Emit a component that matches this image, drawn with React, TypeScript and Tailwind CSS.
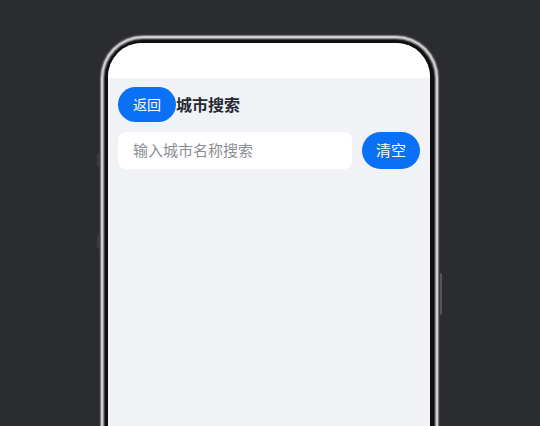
import React from "react";

export default function App() {
  return (
    <div
      className="w-[540px] h-[426px] overflow-hidden bg-[#2b2c30] flex justify-center pt-[34px]"
      style={{ fontFamily: '"Noto Sans", "Noto Sans CJK SC", sans-serif' }}
    >
      <div className="relative ml-[-1px]">
        {/* side buttons */}
        <div className="absolute left-[-2px] top-[119px] w-[2px] h-[14px] bg-[#3c3d41] rounded-l" />
        <div className="absolute left-[-2px] top-[201px] w-[2px] h-[14px] bg-[#3c3d41] rounded-l" />
        <div className="absolute right-[-2px] top-[239px] w-[2px] h-[42px] bg-[#55565a] rounded-r" />
        <div className="w-[341px] h-[460px] rounded-[44px] bg-[#3a3a3c] p-[1px]">
          <div className="w-full h-full rounded-[43px] bg-[#747476] p-[1px]">
            <div className="w-full h-full rounded-[42px] bg-[#cfcfd1] p-[2px]">
              <div className="w-full h-full rounded-[40px] bg-[#8c8c8e] p-[1px]">
                <div className="w-full h-full rounded-[39px] bg-[#3e3e40] p-[1px]">
                  <div className="w-full h-full rounded-[38px] bg-[#0f0f11] pt-[3px] pb-[3px] pl-[3px] pr-[4px]">
                    <div className="w-full h-full rounded-[34px] overflow-hidden bg-[#f0f2f5] flex flex-col">
                      <div className="h-[35px] bg-white shrink-0" />
                      <div className="px-[10px] pt-[9px] flex flex-col gap-[10px]">
                        <div className="flex items-center h-[35px]">
                          <button className="h-[35px] w-[58px] rounded-full bg-[#0a70f5] text-white text-[14px] leading-none">
                            返回
                          </button>
                          <span className="text-[16px] font-bold text-[#272a31] leading-none">
                            城市搜索
                          </span>
                        </div>
                        <div className="flex items-center gap-[10px]">
                          <div className="flex-1 h-[37px] bg-white rounded-[8px] flex items-center px-[15px]">
                            <span className="text-[15px] text-[#8a8d93] leading-none">
                              输入城市名称搜索
                            </span>
                          </div>
                          <button className="h-[37px] w-[58px] rounded-full bg-[#0a70f5] text-white text-[15px] leading-none">
                            清空
                          </button>
                        </div>
                      </div>
                    </div>
                  </div>
                </div>
              </div>
            </div>
          </div>
        </div>
      </div>
    </div>
  );
}
